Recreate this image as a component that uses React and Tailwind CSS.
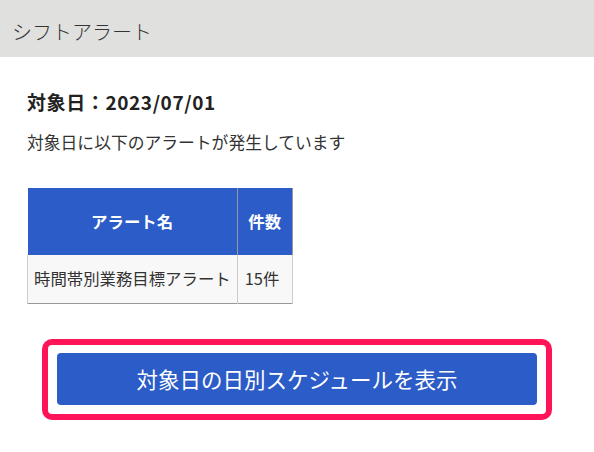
export default function App() {
  const font = { fontFamily: '"Noto Sans CJK JP", "Noto Sans", sans-serif' };
  return (
    <div className="w-[594px] h-[452px] bg-white text-[#222]" style={font}>
      <div className="h-[57px] bg-[#e0e0de] flex items-center pl-[12px] pt-[6px]">
        <h1 className="text-[20px] font-light text-[#333] leading-none">シフトアラート</h1>
      </div>
      <div className="px-[27px] pt-[33px]">
        <p className="text-[19px] font-bold leading-[24px] tracking-[0.6px]">対象日：2023/07/01</p>
        <p className="text-[16.8px] leading-[22px] mt-[17px] text-[#333]">対象日に以下のアラートが発生しています</p>
        <table className="mt-[35px] border-collapse text-[16.4px]">
          <thead>
            <tr className="bg-[#2b5cc7] text-white h-[67px]">
              <th className="w-[209px] font-bold border-r border-[#999] px-[6px]">アラート名</th>
              <th className="w-[55px] font-bold px-[6px] border-r border-[#999]">件数</th>
            </tr>
          </thead>
          <tbody>
            <tr className="bg-[#f8f8f8] h-[48px] border-b border-[#999]">
              <td className="px-[6px] border-r border-l border-[#ccc] whitespace-nowrap text-[#333]">時間帯別業務目標アラート</td>
              <td className="px-[7px] border-r border-[#ccc] whitespace-nowrap text-[#333]">15件</td>
            </tr>
          </tbody>
        </table>
      </div>
      <div className="mt-[35px] ml-[42px] w-[510px] h-[81px] border-[6px] border-[#ff1459] rounded-[10px] p-[8px] pl-[9px]">
        <button className="w-[480px] h-[52px] bg-[#2b5cc7] rounded-[4px] text-white text-[21.5px] leading-none">
          対象日の日別スケジュールを表示
        </button>
      </div>
    </div>
  );
}
